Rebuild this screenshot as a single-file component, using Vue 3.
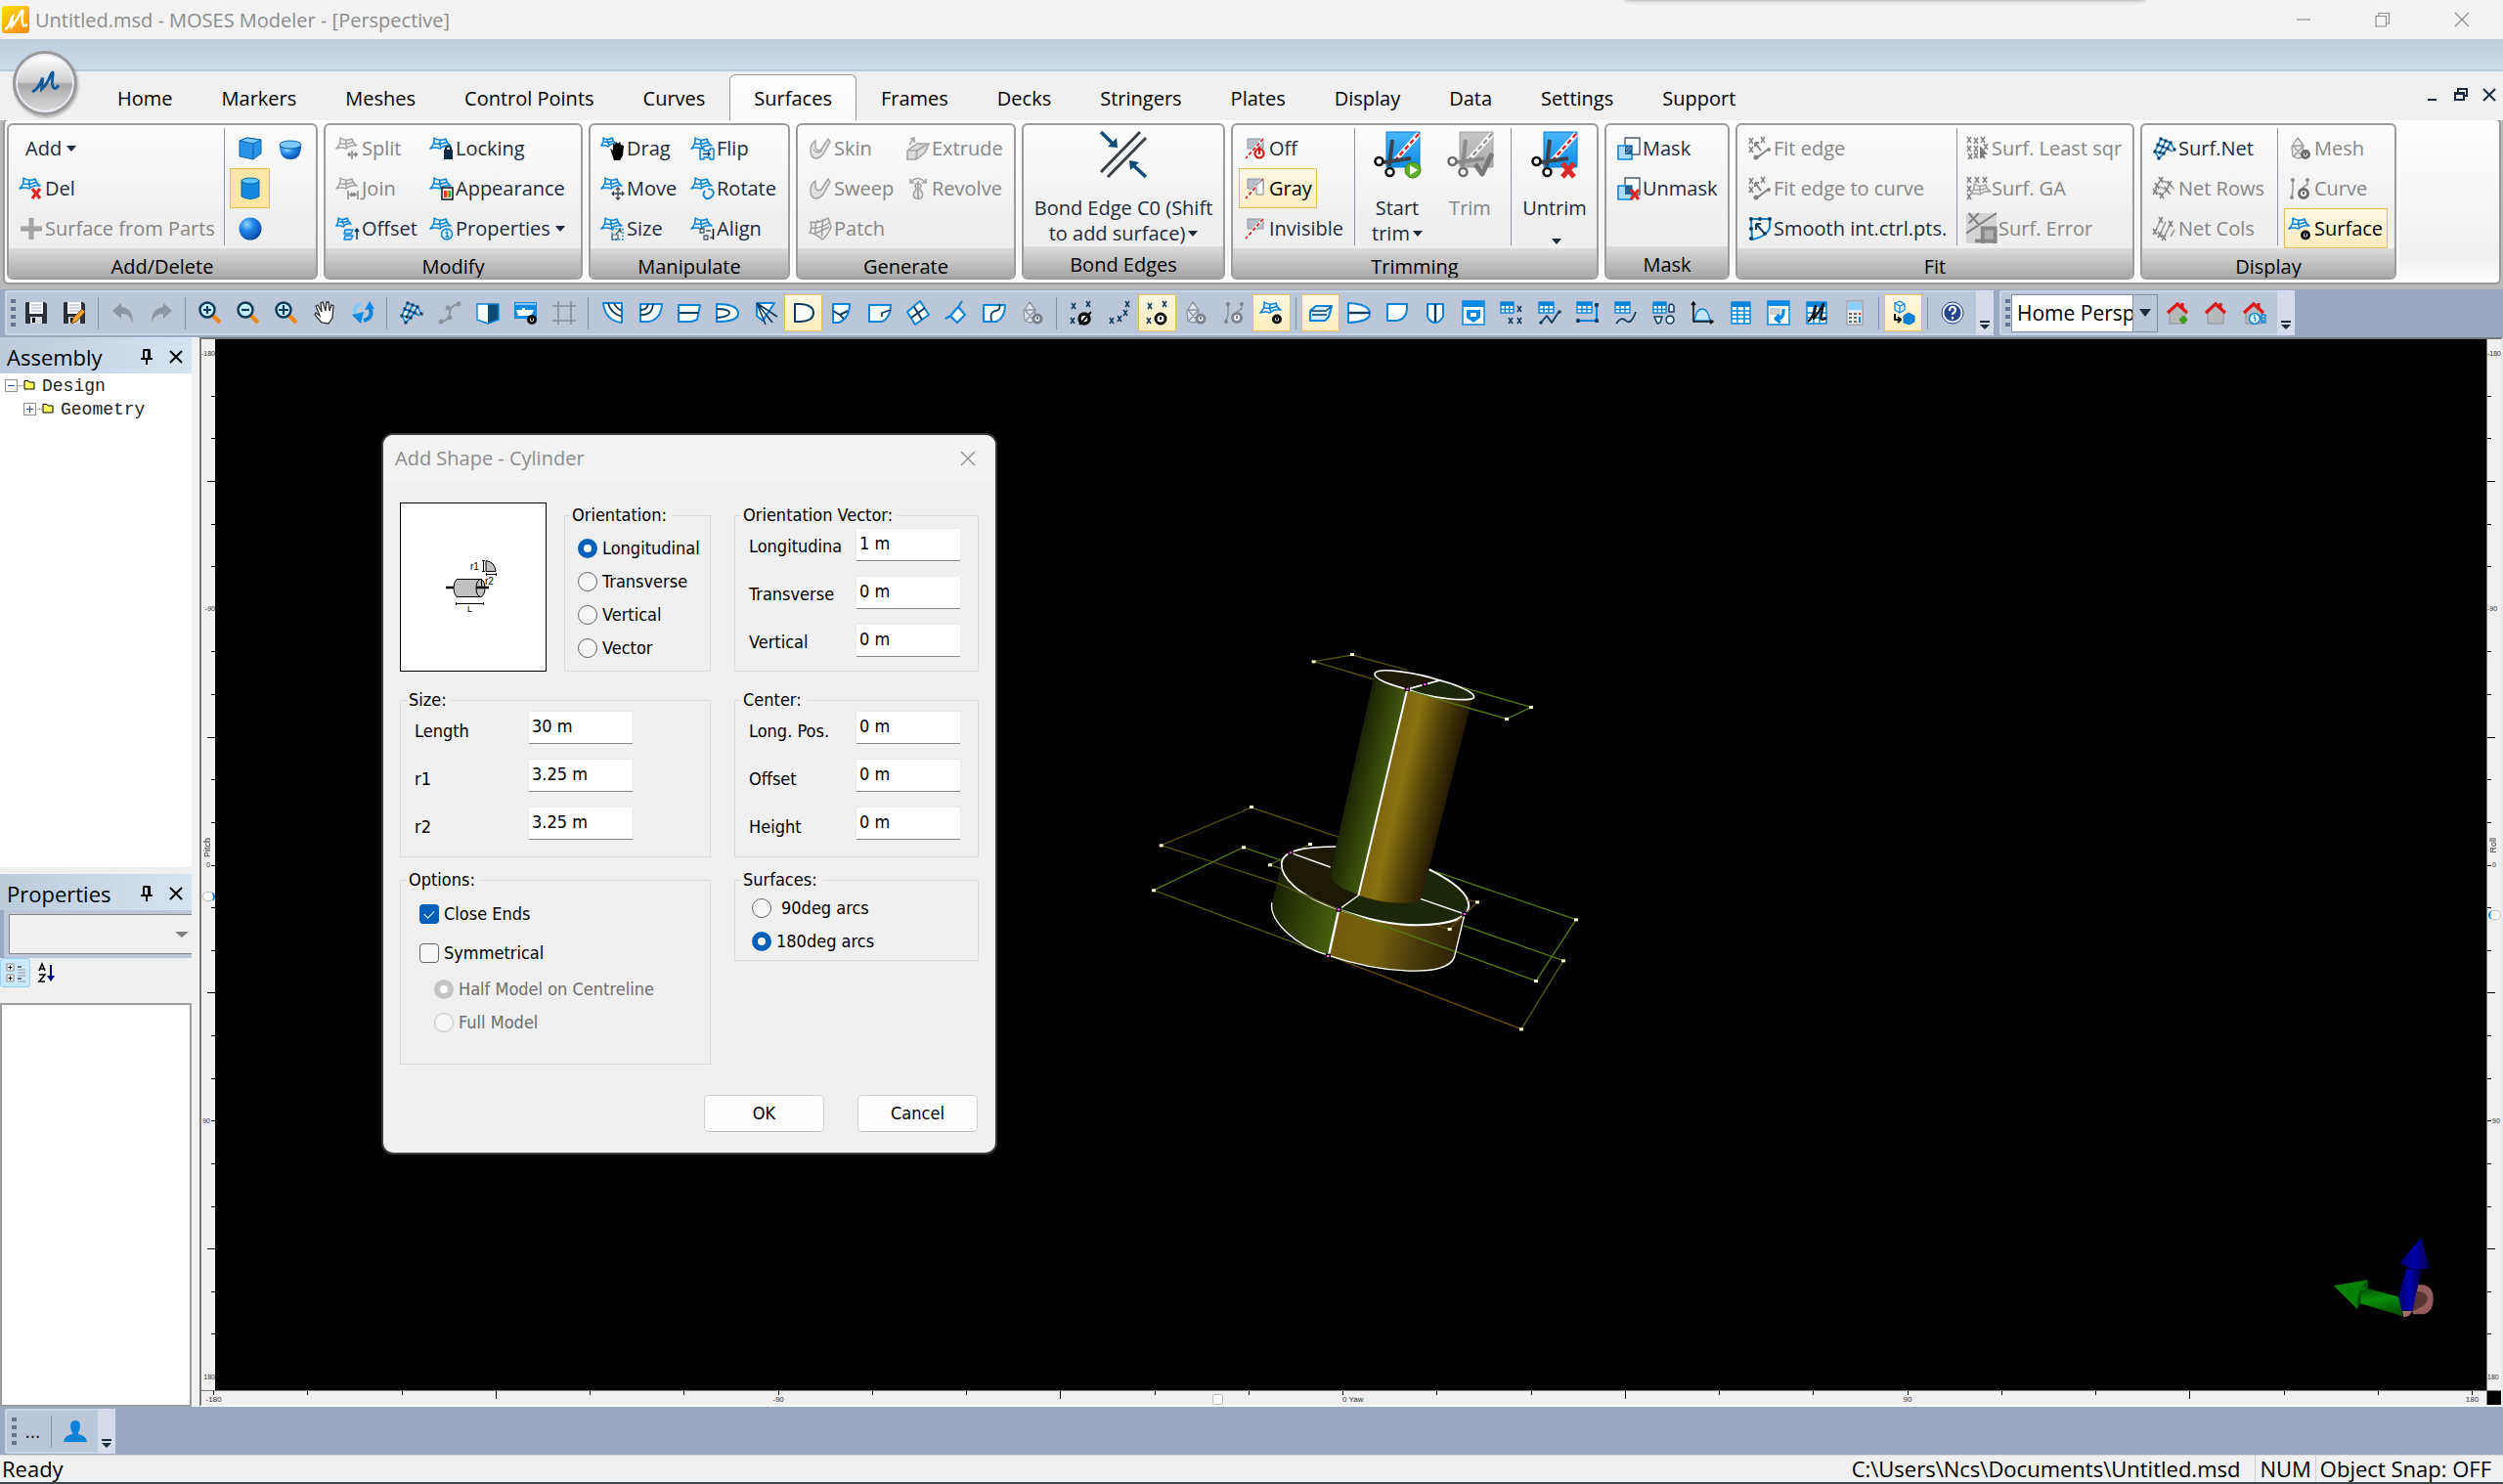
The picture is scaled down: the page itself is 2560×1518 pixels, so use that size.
<script setup>
import { ref } from 'vue'

const B = '#0b84d8'
const N = '#0d3b5e'
const line = (d, c = B, w = 2, f = 'none') => `<path d="${d}" fill="${f}" stroke="${c}" stroke-width="${w}" stroke-linejoin="round"/>`
const surf = line('M4 1Q9 5 16 2Q17 7 21 9Q14 8 10 12Q5 10 0 12Q5 7 4 1Z', B, 1.6, '#e2f3ff') + line('M4 7Q11 8 18 5M10 3.500Q9 8 11 11', B, 1.5)
const surfSmall = line('M2 1Q6 4 11 1Q12 5 15 7Q10 6 7 10Q4 8 0 9Q3 5 2 1ZM3 5Q8 6 13 4M6 3Q6 6 8 8', B, 1.5, '#e2f3ff')
const eye = (x = 17, y = 18, r = 4) => `<circle cx="${x}" cy="${y}" r="${r}" fill="#fff" stroke="#111" stroke-width="3"/><path d="M${x} ${y - 2}v3" stroke="#111" stroke-width="2"/>`
const xs = (pts, c = N) => pts.map(([x, y]) => line(`M${x - 2} ${y - 3}l4 6m0-6l-4 6`, c, 1.5)).join('')
const redx = (x = 17, y = 17) => line(`M${x - 4} ${y - 5}l8 10m0-10l-8 10`, '#dc2a2a', 3.4)
const table = (w = 15, h = 11) => `<rect x="1" y="1" width="${w}" height="${h}" fill="#fff" stroke="${B}" stroke-width="1.400"/><rect x="1" y="1" width="${w}" height="4" fill="${B}"/>` + line(`M1 8.500h${w}M${1 + w / 3} 4v${h - 3}M${1 + w * 2 / 3} 4v${h - 3}`, B, 1.4)
const net = (c = B) => line('M8 2L18 6L22 13M5 8L15 12L20 15M2 15L11 17M8 2L2 15L6 22M13 4L7 16M18 6L11 17L6 22', c, 1.5, '#eef8ff') + [[8, 2], [13, 4], [18, 6], [22, 13], [5, 8], [10, 10], [15, 12], [2, 15], [7, 16], [11, 17], [6, 22]].map(([x, y]) => `<rect x="${x - 1.5}" y="${y - 1.5}" width="3" height="3" fill="${N}"/>`).join('')
const mag = (s) => line('M14 14L22 22', '#f08a17', 4.5) + `<circle cx="9" cy="9" r="7.500" fill="#c9efff" stroke="${N}" stroke-width="2.500"/>` + line(s, N, 2.2)
const house = '<path d="M4 12v11h16V12l-8-8z" fill="#b7b9bd" stroke="#8d9095"/><path d="M2 12L12 3l10 9M17 2v5" fill="none" stroke="#dd1717" stroke-width="3.200"/>'
const trimMini = '<path d="M4 2h16v10H4z" fill="#b9bfc8" stroke="#8d949e"/><path d="M20 2L2 22" stroke="#fff" stroke-width="3"/><path d="M20 2L2 22" stroke="#d22" stroke-width="1.800" stroke-dasharray="4 2"/>'
const scissor = '<path d="M13 1h34v36H13z" fill="url(#sky)" stroke="#0078cf"/><path d="M46 3L22 30" stroke="#fff" stroke-width="5"/><path d="M46 3L22 30" stroke="#e02020" stroke-width="2.500" stroke-dasharray="5 3"/><path d="M19 9L16 36M38 28L10 32" stroke="#3b424c" stroke-width="4"/><circle cx="5.500" cy="31" r="4" fill="#fff" stroke="#111" stroke-width="2.600"/><circle cx="16.500" cy="42" r="4" fill="#fff" stroke="#111" stroke-width="2.600"/>'
const skin = '<path d="M2 14Q2 7 7 4v7q2 4 6 2L20 2l2 3-6 11q-4 6-9 6-5-1-5-8z" fill="#cdd8e2" stroke="#566b80" stroke-width="1.400"/>'
const floppy = '<path d="M2 1h19l2 2v20H1V2z" fill="#2b2f36"/><path d="M5 1h14v12H5z" fill="#f5f7fa"/><path d="M7 4h10M7 7h10M7 10h10" stroke="#a9b2bd"/><path d="M6 16h12v7H6z" fill="#d5d9df"/><path d="M8 17h3v5H8z" fill="#111"/>'
const D = 'M3 3h6q13 1 13 9t-13 9H3z'
const hull = 'M2 3h20q1 16-11 17H2z'

const icons = {
  del: surf + redx(),
  plus: line('M12 1v22M1 12h22', '#66727f', 5),
  box: '<path d="M1 4L9 1l14 2v14l-8 6L1 20z" fill="#2b93e6" stroke="#0863a8"/><path d="M1 4l14 3 8-4L9 1z" fill="#7cc7fb" stroke="#0863a8"/><path d="M15 7v16" stroke="#0863a8"/>',
  bowl: '<path d="M1 9q0 14 11 14T23 9z" fill="url(#ball)"/><ellipse cx="12" cy="8" rx="11" ry="4" fill="#7cc7fb" stroke="#0863a8"/>',
  cylinder: '<path d="M3 4v16q9 5 18 0V4z" fill="#1689df" stroke="#0863a8"/><ellipse cx="12" cy="4" rx="9" ry="3" fill="#5cc0fb" stroke="#0863a8"/>',
  sphere: '<circle cx="12" cy="12" r="11.500" fill="url(#ball)"/>',
  split: surf + line('M16 14v9M12 18h3M17 18h5M14 16l-2 2 2 2M19 16l2 2-2 2', N, 1.5),
  join: surf + line('M12 14v9M22 14v9M13 18h8M15 16l2 2-2 2M19 16l-2 2 2 2', N, 1.4),
  offset: surfSmall + line('M9 13h8l-2 4H8zM9 19h8l-2 4H8z', B, 1.4, '#bfe3fb') + line('M21 23V12M19 15l2-3 2 3', N, 1.5),
  locking: surf + '<path d="M14 13h9v10h-9z" fill="#0b2a45"/><path d="M16 14v-3q2.500-3 5 0v3" fill="none" stroke="#0b2a45" stroke-width="2"/>',
  appearance: surf + '<path d="M12 11h11v12H12z" fill="#fff" stroke="#111" stroke-width="1.500"/><path d="M14 14h3v7h-3z" fill="#e33"/><path d="M17 14h2v7h-2z" fill="#ea2"/><path d="M19 14h2v7h-2z" fill="#2a4"/>',
  properties: surf + `<circle cx="17" cy="17.500" r="5.500" fill="#dff3ff" stroke="${B}" stroke-width="1.500"/>` + line('M15.500 16h2v4m-2 0h4M17 13v1.500', B, 1.6),
  drag: surfSmall + '<path d="M9 12l3 2V7l2 1 1-3 2 2 2-2 1 3 3 1-1 10-3 5h-6z" fill="#000"/>',
  flip: surf + line('M9 12h4v2h6v-2h4v11h-4v-2h-6v2H9z', B, 1.5, '#dff3ff') + line('M12 17.500h7m-2-2l2 2-2 2', N, 1.5),
  move: surf + line('M17 11v12M11 17h12M15 13l2-2 2 2M15 21l2 2 2-2M13 15l-2 2 2 2M21 15l2 2-2 2', '#33404d', 1.3),
  rotate: surf + line('M14 14q-3 4 0 7t7-1 0-7l-4-1', B, 1.8),
  size: surf + line('M11 12h11v11H11z', B, 1.3, '#eee').replace('/>', ' stroke-dasharray="2 1.500"/>') + line('M11 18h6v5h-6zM15 17l5-4m-3 0h3v3', '#4a5866', 1.2),
  align: surf + line('M9 12h4v4H9zM13 19h4v4h-4zM15 14h5M19 21h3', '#4a5866', 1.3) + line('M22.500 12v11', '#111', 1.5),
  skin: skin + line('M5 13q3 5 9 1', '#566b80', 1.4), sweep: skin,
  patch: line('M2 5q8 2 18-4l3 9q-3 8-9 13-6-6-13-7 3-4 1-11zM3 11q9 1 18-5M6 17q8-3 15-7M9 3q-3 6-2 14M15 2q-2 9-1 18', '#5c6b7a', 1.5),
  extrude: '<path d="M1 14l10-7h12l-4 9-9 7H1z" fill="#c3cbd4" stroke="#5c6b7a" stroke-width="1.500"/><path d="M1 14h10l-1 9M11 14L22 7M3 8L8 1M4 2l4-1v5" fill="none" stroke="#5c6b7a" stroke-width="1.600"/>',
  revolve: '<path d="M9 8q3-3 6 0l-1 5q4 4 2 8-4 3-8 0-2-4 2-8z" fill="#d3dae2" stroke="#5c6b7a" stroke-width="1.500"/><path d="M12 4v19M4 6q7-9 16 0M4 2v4h4M20 2v4h-4" fill="none" stroke="#5c6b7a" stroke-width="1.600"/>',
  off: trimMini + '<circle cx="16" cy="17" r="4.500" fill="#fff" stroke="#dc1010" stroke-width="2.200"/><path d="M16 10v8" stroke="#dc1010" stroke-width="2.200"/>',
  gray: trimMini + '<path d="M13 8l7-5v15h-7z" fill="#fff" stroke="#7c848e"/>',
  invisible: trimMini,
  mask: line('M8 1h15v17H8z', '#4b5a68', 1.4, '#fff') + line('M1 9h14v14H1z', B, 1.6, '#a9dcfb') + '<path d="M8 9h7v9H8z" fill="#26628f"/><path d="M9 13l3-3M9 17l5-6" stroke="#9bd"/>',
  unmask: line('M8 1h15v17H8z', '#4b5a68', 1.4, '#fff') + line('M1 9h14v14H1z', B, 1.6, '#a9dcfb') + '<path d="M8 9h7v9H8z" fill="#26628f"/>' + redx(18, 18),
  fit: xs([[3, 4], [15, 3], [3, 13]]) + line('M7 6l6 8M7 6v4M7 6h4M20 13L8 22', N, 2) + `<circle cx="21" cy="13" r="2" fill="${N}"/><circle cx="8" cy="21" r="2.500" fill="${N}"/>`,
  smooth: line('M3 2h19v9q-3 9-18 12z', B, 2, '#fff') + line('M8 7l8 9M8 7v6M8 7h5', N, 2) + [[3, 2], [12, 2], [22, 2], [3, 12], [17, 17], [3, 22]].map(([x, y]) => `<circle cx="${x}" cy="${y}" r="2" fill="${N}"/>`).join(''),
  least: xs([[3, 3], [10, 4], [17, 3], [3, 12], [10, 12], [20, 10], [4, 20], [10, 19]]) + '<path d="M14 9l8 9h-4l2 5-3-2-3 1z" fill="#222"/>',
  ga: xs([[3, 3], [11, 3], [19, 3], [3, 12], [3, 20]]) + '<g transform="translate(4 6)">' + surf + '</g>',
  error: '<path d="M0 0h24v24H0z" fill="#b9c3d2"/><path d="M24 0L0 16M2 0l8 9M10 0L2 8" stroke="#333" stroke-width="1.500" fill="none"/><path d="M13 24V12h10v12M7 22h16" stroke="#444" stroke-width="3" fill="#888"/>',
  net: net(),
  rows: line('M8 3L17 7L22 13M4 9L14 13L18 18M2 15L9 19', '#4c6b86', 1.6) + xs([[8, 3], [17, 7], [4, 9], [14, 13], [2, 15], [9, 19]]),
  cols: line('M8 3L2 15M13 5L7 18M18 7L11 21M22 13L18 20', '#4c6b86', 1.6) + xs([[8, 3], [2, 15], [7, 18], [18, 7], [11, 21]]),
  mesh: line('M9 1l6 8-2 12-4 1-5-2-1-10zM4 9h11M5 20l9-10M14 20L4 9', '#55616d', 1.3, '#dfe4ea') + eye(17, 18, 3.5),
  curve: line('M4 3v8q0 4-1 10M19 3v5q-6 2-7 8', '#55616d', 1.6) + '<circle cx="4" cy="3" r="2" fill="#445"/><circle cx="19" cy="3" r="2" fill="#445"/><circle cx="3" cy="21" r="2" fill="#445"/>' + eye(15, 17, 4.5),
  surface: surf + eye(17, 18.5, 3.5),
  save: floppy,
  saveAs: floppy + '<path d="M9 23l2-6L20 8l3 3-9 10z" fill="#f2a531" stroke="#7c4a10"/>',
  undo: '<path d="M10 2L1 10l9 8v-5q8-1 12 9 0-15-12-16z" fill="#8b95a5"/>',
  redo: '<path d="M14 2l9 8-9 8v-5q-8-1-12 9 0-15 12-16z" fill="#8b95a5"/>',
  zoomIn: mag('M9 5v8M5 9h8'), zoomOut: mag('M5 9h8'), zoomFit: mag('M9 4v10M4 9h10'),
  hand: '<path d="M9 22L2 14l1-2 4 3-4-10 2-1 4 7-1-9 2-1 3 9 1-9h2l1 9 2-6 2 1-1 12-4 6z" fill="#fff" stroke="#333" stroke-width="1.300"/>',
  spin: line('M10 3q-8 3-6 9', '#7cc7fb', 4) + line('M19 5q5 12-6 15', B, 4) + '<path d="M14 9l5-9 5 8zM13 11L1 14l9 9z" fill="#0b8ae6"/>',
  nodes: line('M4 21Q12 19 12 12T20 3', '#8d949e', 2) + [[3, 21], [12, 17], [10, 7], [21, 3]].map(([x, y]) => `<circle cx="${x}" cy="${y}" r="2.500" fill="#8d949e"/>`).join(''),
  half: '<path d="M1 3h11v20L1 19z" fill="#fff"/><path d="M12 3h11v16l-11 4z" fill="#0d4a75"/>' + line('M1 3h22v16l-11 4-11-4z', '#0b84d8', 1.4),
  ship: '<path d="M0 1h23v17H0z" fill="#0b8ae6"/><path d="M1 3h21" stroke="#fff"/><path d="M2 9h6V7h3v2h9l-3 6H4z" fill="#fff"/>' + eye(18, 19, 3.5),
  grid: line('M6 0v24M19 0v24M0 5h24M0 20h24', '#868e9b', 1.6),
  v1: line('M2 2h19v20Q4 20 2 2z', B, 2, '#fff') + line('M7 2q2 10 14 14M13 2q2 5 8 8', N, 1.8),
  v2: line('M1 3h22q-1 16-14 18H1z', B, 2, '#fff') + line('M1 14q12 1 13-11M1 9q7 0 8-6', N, 1.8),
  v3: line('M1 4h22l-3 15-6 2H1z', B, 2, '#fff') + line('M1 12h21', N, 2),
  v4: line('M1 3q21 0 22 9t-22 9z', B, 2, '#fff') + line('M1 8q13 0 13 4T1 17', N, 1.8),
  v5: line('M3 2h18L9 20 3 15z', B, 2, '#fff') + line('M3 2l9 22M3 2l16 20M3 2l21 14', N, 1.6),
  v6: line(D, N, 2, '#fff'),
  v7: line('M3 3h17q0 14-11 19H3z', B, 2, '#fff') + line('M3 10l7 4 4 4M10 14l8-4', N, 2),
  v8: line('M1 4h22q0 13-9 17H1z', B, 2, '#fff') + line('M23 9l-9 3v4', N, 1.8),
  v9: line('M14 0l9 14-14 10L1 11z', B, 2, '#fff') + line('M8 6l8 13M19 7L5 17', N, 2),
  v10: line('M14 6l7 8-8 8-7-7zM14 6l4-6M1 18l5-3', B, 2.2, '#fff'),
  v11: line('M1 4h22q0 13-9 17H1z', B, 2, '#fff') + line('M17 3q2 6-4 7t-4 10', N, 1.8),
  meshGray: line('M9 1l6 8-2 12-4 1-5-2-1-10zM4 9h11M5 20l9-10M14 20L4 9', '#8d949e', 1.3, '#dfe4ea') + eye().replace(/#111/g, '#7b828d'),
  hideX: xs([[4, 5], [19, 3], [3, 20]]) + '<circle cx="15" cy="18" r="5" fill="#fff" stroke="#111" stroke-width="3.500"/><path d="M10 24L22 11" stroke="#111" stroke-width="2"/>',
  allX: xs([[20, 3], [18, 12], [12, 18], [4, 20]]),
  showX: xs([[4, 5], [19, 3], [3, 20]]) + eye(15, 18, 5),
  curveGray: line('M6 3v8q0 4-2 10M20 3v5q-6 2-7 8', '#8d949e', 1.6) + '<circle cx="6" cy="3" r="2" fill="#7b828d"/><circle cx="20" cy="3" r="2" fill="#7b828d"/><circle cx="4" cy="21" r="2" fill="#7b828d"/>' + eye(15, 17, 4.5).replace(/#111/g, '#7b828d'),
  w1: line('M1 10l6-5h16l-3 11-4 4H1z', B, 2.2, '#d6eefc') + line('M2 10h15l5-4M3 14h15', N, 1.4),
  w2: line('M1 2q21 1 22 10T1 22z', B, 2, '#fff') + line('M1 12h22', N, 2.4),
  w3: line(hull, B, 2, '#fff'),
  w4: line('M4 3h16v13q-4 6-8 6-5 0-8-6z', B, 2, '#fff') + line('M12 3v18', N, 2.4),
  w5: '<path d="M1 0h22v24H1z" fill="#fff" stroke="#0b84d8" stroke-width="1.500"/><path d="M1 0h22v6H1z" fill="#0b8ae6"/><path d="M5 9h14v8l-7 5-7-5z" fill="#0b8ae6"/><path d="M9 12h6v4H9z" fill="#fff"/>',
  t1: table(13, 11) + xs([[20, 8], [11, 20], [20, 20]]),
  t2: table() + line('M3 22l6-7 5 7 8-12', N, 1.8) + `<circle cx="3" cy="22" r="1.800" fill="${N}"/><circle cx="22" cy="11" r="1.800" fill="${N}"/>`,
  t3: table() + line('M2 20h20', B, 2) + line('M21 4v14', B, 2) + [[2, 20], [21, 20], [21, 4]].map(([x, y]) => `<circle cx="${x}" cy="${y}" r="2.200" fill="${N}"/>`).join(''),
  t4: table() + line('M2 23q5-8 10-3t10-9', N, 1.7),
  t5: table(13, 11) + line('M17 11V5q2-4 5 0v6zM2 16h8l-2 6-3 1zM18 15a4 4 0 1 0 .1 0z', N, 1.5, '#dff3ff'),
  chart: '<path d="M4 20q2-12 8-12t8 12z" fill="#bfe6ff" stroke="#0b84d8" stroke-width="1.500"/>' + line('M3 1v20h20M1 4l2-3 2 3M20 19l3 2-3 2', '#111', 1.6),
  t6: '<path d="M3 1h19v22H3z" fill="#fff"/><path d="M3 1h19v5H3z" fill="#0b84d8"/>' + line('M3 1h19v22H3zM3 10h19M3 14h19M3 18h19M9 6v17M16 6v17', B, 1.5),
  t7: '<path d="M1 0h22v24H1z" fill="#fff" stroke="#0b84d8" stroke-width="1.500"/><path d="M1 0h22v5H1z" fill="#0b8ae6"/><path d="M3 7h11v7H3z" fill="#ccd1d8"/>' + line('M17 8q1 10-7 10M13 14l-4 4 5 4', '#0b8ae6', 3.2),
  t8: '<path d="M2 1h20v22H2z" fill="#fff"/><path d="M2 1h20v5H2z" fill="#0b84d8"/>' + line('M2 1h20v22H2zM2 12h20M2 17h20M9 6v17M15 6v17', B, 1.5) + line('M3 21Q8 18 11 5l-2 13Q14 12 19 3l-3 15q2 2 6-1', '#111', 2.2),
  calc: '<path d="M4 0h16v24H4z" fill="#e9e9ec" stroke="#8b9099"/><path d="M5 1h14v8H5z" fill="#8ad0fb"/><path d="M6 12h3v2H6zM6 16h3v2H6zM6 20h3v2H6zM11 12h3v2h-3zM11 16h3v2h-3zM11 20h3v2h-3z" fill="#666"/><path d="M16 12h2v2h-2z" fill="#d33"/><path d="M16 16h2v6h-2z" fill="#0b84d8"/>',
  convert: line('M3 2l5-2 5 3v6l-5 3-5-3zM3 2l5 3 5-2M8 5v7', B, 1.3, '#dff3ff') + '<path d="M12 15l5-3 6 3v6l-5 3-6-2z" fill="#0b84d8" stroke="#0b6fb8"/>' + line('M3 13v6h6M6 16l3 3-3 3', '#111', 2),
  help: '<circle cx="12" cy="12" r="11" fill="#e9eefb" stroke="#2c4684"/><circle cx="12" cy="12" r="8.500" fill="#24448f"/>' + line('M9 10q0-4 3-4t3 3q0 2-3 4v1M12 16v2.500', '#fff', 2.2),
  homeAdd: house + line('M18 15v8M14 19h8', '#3d9a12', 3.4), home: house,
  homeInfo: house + `<circle cx="13" cy="18" r="5.500" fill="#dff3ff" stroke="${B}" stroke-width="1.500"/>` + line('M12 17h1.500v3.500M13 14v1.500M20 14h4v8h-4zM21 17h2M21 20h2', B, 1.3),
  bond: line('M41 1L1 42M47 7L8 47', '#3b4148', 3) + line('M1 1L14 14M47 47L34 35', '#0d4a75', 3.4) + '<path d="M18 17L8 16l9-9zM30 30l10 2-9 8z" fill="#0d4a75"/>',
  startTrim: scissor + '<circle cx="40" cy="40" r="8" fill="#5fae2b" stroke="#3d8412"/><path d="M37 35l8 5-8 5z" fill="#fff"/>',
  trim: scissor + line('M29 34l7 10L46 23', '#222', 5),
  untrim: scissor + line('M32 33l12 14M44 33L32 47', '#dc2a2a', 5),
}

const tabs = ['Home', 'Markers', 'Meshes', 'Control Points', 'Curves', 'Surfaces', 'Frames', 'Decks', 'Stringers', 'Plates', 'Display', 'Data', 'Settings', 'Support']

const i = (icon, text, o = {}) => ({ icon, text, ...o })
const off = { off: true }
const groups = [
  { name: 'Add/Delete', w: 318, cols: [
    { w: 214, items: [i('', 'Add', { arrow: true }), i('del', 'Del'), i('plus', 'Surface from Parts', off)] }, { sep: true, w: 6 },
    { w: 41, shape: true, items: [i('box', '', { label: 'Box' }), i('cylinder', '', { on: true, label: 'Cylinder' }), i('sphere', '', { label: 'Sphere' })] },
    { w: 41, shape: true, items: [i('bowl', '', { label: 'Bowl' })] }] },
  { name: 'Modify', w: 265, cols: [
    { w: 96, items: [i('split', 'Split', off), i('join', 'Join', off), i('offset', 'Offset')] },
    { w: 156, items: [i('locking', 'Locking'), i('appearance', 'Appearance'), i('properties', 'Properties', { arrow: true })] }] },
  { name: 'Manipulate', w: 206, cols: [
    { w: 92, items: [i('drag', 'Drag'), i('move', 'Move'), i('size', 'Size')] },
    { w: 104, items: [i('flip', 'Flip'), i('rotate', 'Rotate'), i('align', 'Align')] }] },
  { name: 'Generate', w: 225, cols: [
    { w: 100, items: [i('skin', 'Skin', off), i('sweep', 'Sweep', off), i('patch', 'Patch', off)] },
    { w: 115, items: [i('extrude', 'Extrude', off), i('revolve', 'Revolve', off)] }] },
  { name: 'Bond Edges', w: 208, cols: [{ w: 192, big: i('bond', ['Bond Edge C0 (Shift', 'to add surface)'], { arrow: true }) }] },
  { name: 'Trimming', w: 376, cols: [
    { w: 118, items: [i('off', 'Off'), i('gray', 'Gray', { on: true }), i('invisible', 'Invisible')] }, { sep: true, w: 2 },
    { w: 84, big: i('startTrim', ['Start', 'trim'], { arrow: true }) }, { w: 65, big: i('trim', ['Trim'], off) }, { sep: true, w: 3, gap: true },
    { w: 84, big: i('untrim', ['Untrim', ''], { arrow: true }) }] },
  { name: 'Mask', w: 128, cols: [{ w: 112, items: [i('mask', 'Mask'), i('unmask', 'Unmask')] }] },
  { name: 'Fit', w: 408, cols: [
    { w: 218, items: [i('fit', 'Fit edge', off), i('fit', 'Fit edge to curve', off), i('smooth', 'Smooth int.ctrl.pts.')] }, { sep: true, w: 5 },
    { w: 174, items: [i('least', 'Surf. Least sqr', off), i('ga', 'Surf. GA', off), i('error', 'Surf. Error', { off: true, wide: true })] }] },
  { name: 'Display', w: 262, cols: [
    { w: 132, items: [i('net', 'Surf.Net'), i('rows', 'Net Rows', off), i('cols', 'Net Cols', off)] }, { sep: true, w: 7 },
    { w: 110, items: [i('mesh', 'Mesh', off), i('curve', 'Curve', off), i('surface', 'Surface', { on: true })] }] },
]

const tools = [
  'save', 'saveAs', '|', 'undo', 'redo', '|', 'zoomIn', 'zoomOut', 'zoomFit', 'hand', 'spin', '|', 'net', 'nodes', 'half', 'ship', 'grid', '|',
  'v1', 'v2', 'v3', 'v4', 'v5', '*v6', 'v7', 'v8', 'v9', 'v10', 'v11', 'meshGray', '|', 'hideX', 'allX', '*showX', 'meshGray', 'curveGray', '*surface', '|',
  '*w1', 'w2', 'w3', 'w4', 'w5', 't1', 't2', 't3', 't4', 't5', 'chart', 't6', 't7', 't8', 'calc', '|', '*convert', '|', 'help',
]

const ticks = Array.from({ length: 25 }, (_, n) => {
  const v = -180 + n * 15
  const label = v % 90 === 0 ? String(v) : ''
  return { v, label, major: v % 90 !== 0 && v % 45 === 0, bare: label.length > 2 }
})

const orientation = ref('Longitudinal')
const arcs = ref('180deg arcs')
const model = ref('Half Model on Centreline')
const closeEnds = ref(true)
const symmetrical = ref(false)
const vector = ref([['Longitudina', '1 m'], ['Transverse', '0 m'], ['Vertical', '0 m']])
const size = ref([['Length', '30 m'], ['r1', '3.25 m'], ['r2', '3.25 m']])
const center = ref([['Long. Pos.', '0 m'], ['Offset', '0 m'], ['Height', '0 m']])
</script>

<template>
  <div class="app">
    <svg class="defs" width="0" height="0" aria-hidden="true">
      <defs>
        <radialGradient id="ball" cx=".35" cy=".3" r=".8"><stop offset="0" stop-color="#8fd2ff" /><stop offset=".4" stop-color="#1f86e6" /><stop offset="1" stop-color="#063f96" /></radialGradient>
        <linearGradient id="sky" x1="0" y1="0" x2="0" y2="1"><stop offset="0" stop-color="#4ab4f8" /><stop offset="1" stop-color="#0b8fe8" /></linearGradient>
      </defs>
    </svg>

    <header class="titlebar">
      <svg class="logo" viewBox="0 0 28 28"><defs><linearGradient id="lg" x1="0" y1="0" x2=".6" y2="1"><stop offset="0" stop-color="#ffe100" /><stop offset="1" stop-color="#f7941d" /></linearGradient></defs><rect width="28" height="28" rx="3" fill="url(#lg)" /><path d="M3 24Q8 22 10 12l1-1-1 10Q14 17 20 5q2-1 1 3-1 9 1 12 1 1 4-1" fill="none" stroke="#fff" stroke-width="2.500" /></svg>
      <span class="title">Untitled.msd - MOSES Modeler - [Perspective]</span>
      <button class="win" aria-label="Minimize"><svg viewBox="0 0 16 16"><path d="M1 8h14" /></svg></button>
      <button class="win" aria-label="Restore"><svg viewBox="0 0 16 16"><path d="M1 4.500h10.500V15H1zM4 4V1.500h10.500V12H12" /></svg></button>
      <button class="win" aria-label="Close"><svg viewBox="0 0 16 16"><path d="M1 1l14 14M15 1L1 15" /></svg></button>
      <div class="snapbar"></div>
    </header>

    <div class="strip"></div>
    <nav class="tabs">
      <button class="orb" aria-label="Application menu"><svg viewBox="0 0 30 26"><path d="M1 24Q8 20 12 9l-1 12Q17 16 21 5q2-4 2 0-2 12 1 15 2 1 5-3" fill="none" stroke="#0d5a9c" stroke-width="3" /></svg></button>
      <button v-for="t in tabs" :key="t" class="tab" :class="{ active: t === 'Surfaces' }">{{ t }}</button>
      <span class="mdi">
        <button aria-label="Minimize view"><svg viewBox="0 0 16 16"><path d="M3 13h9" /></svg></button>
        <button aria-label="Restore view"><svg viewBox="0 0 16 16"><path d="M5 5V2h9v7h-3M2 6h9v7H2zM2 7h9" /></svg></button>
        <button aria-label="Close view"><svg viewBox="0 0 16 16"><path d="M2 2l12 12M14 2L2 14" /></svg></button>
      </span>
    </nav>

    <div class="ribbonwrap">
      <div class="ribbon">
        <section v-for="g in groups" :key="g.name" class="group" :style="{ width: g.w + 'px' }">
          <div class="cols">
            <div v-for="(c, n) in g.cols" :key="n" class="col" :class="{ sep: c.sep, gap: c.gap, shapes: c.shape }" :style="{ width: c.w + 'px' }">
              <button v-for="it in c.items" :key="it.icon + it.text" class="item" :class="{ off: it.off, on: it.on, noicon: !it.icon }" :aria-label="it.label">
                <svg v-if="it.icon" :class="{ wide: it.wide }" viewBox="0 0 24 24" v-html="icons[it.icon]"></svg><span v-if="it.text">{{ it.text }}</span><i v-if="it.arrow" class="arrow"></i>
              </button>
              <button v-if="c.big" class="big" :class="{ off: c.big.off }">
                <svg viewBox="0 0 48 48" v-html="icons[c.big.icon]"></svg>
                <span v-for="(l, k) in c.big.text" :key="k" class="bl" :class="{ lone: !l }">{{ l }}<i v-if="c.big.arrow && k === 1" class="arrow"></i></span>
              </button>
            </div>
          </div>
          <h2>{{ g.name }}</h2>
        </section>
      </div>
    </div>

    <div class="toolbars">
      <div class="bar">
        <span class="grip"></span>
        <template v-for="(t, n) in tools" :key="n">
          <span v-if="t === '|'" class="tsep"></span>
          <button v-else class="tool" :class="{ on: t[0] === '*' }" :aria-label="t.replace('*', '')"><svg viewBox="0 0 24 24" v-html="icons[t.replace('*', '')]"></svg></button>
        </template>
        <button class="more" aria-label="More tools"></button>
      </div>
      <div class="bar">
        <span class="grip"></span>
        <span class="combo"><select aria-label="View"><option>Home Perspective</option></select><i class="arrow"></i></span>
        <button v-for="t in ['homeAdd', 'home', 'homeInfo']" :key="t" class="tool" :aria-label="t"><svg viewBox="0 0 24 24" v-html="icons[t]"></svg></button>
        <button class="more" aria-label="More views"></button>
      </div>
    </div>

    <main class="work">
      <aside class="side">
        <header class="phead"><h3>Assembly</h3><button aria-label="Pin"><svg viewBox="0 0 16 16"><path d="M4.500 1h7M5 1v9M10 1v9M11 1v9M2 10h12M8 10v6" /></svg></button><button aria-label="Close"><svg viewBox="0 0 16 16"><path d="M2 2l12 12M14 2L2 14" /></svg></button></header>
        <ul class="tree">
          <li><svg viewBox="0 0 34 16"><rect x=".5" y="1.500" width="12" height="12" fill="#fff" stroke="#919191" /><path d="M3 7.500h7" stroke="#2b4f9b" /><path d="M14 7.500h5" stroke="#888" stroke-dasharray="1 1" /><path d="M20 2.500h4l1 1.500h5v7H20z" fill="#ffff5e" stroke="#000" /></svg>Design</li>
          <li class="sub"><svg viewBox="0 0 34 16"><rect x=".5" y="1.500" width="12" height="12" fill="#fff" stroke="#919191" /><path d="M3 7.500h7M6.500 4v7" stroke="#2b4f9b" /><path d="M14 7.500h5" stroke="#888" stroke-dasharray="1 1" /><path d="M20 2.500h4l1 1.500h5v7H20z" fill="#ffff5e" stroke="#000" /></svg>Geometry</li>
        </ul>
        <header class="phead"><h3>Properties</h3><button aria-label="Pin"><svg viewBox="0 0 16 16"><path d="M4.500 1h7M5 1v9M10 1v9M11 1v9M2 10h12M8 10v6" /></svg></button><button aria-label="Close"><svg viewBox="0 0 16 16"><path d="M2 2l12 12M14 2L2 14" /></svg></button></header>
        <div class="pcombo"><select aria-label="Object" disabled></select><i class="arrow"></i></div>
        <div class="psort">
          <button class="sel" aria-label="Categorized"><svg viewBox="0 0 20 20"><path d="M1 1h7v7H1zM1 12h7v7H1z" fill="#fff" stroke="#888" /><path d="M2.500 4.500h4M4.500 2.500v4M2.500 15.500h4M4.500 13.500v4M12 4h4M12 16h4" stroke="#000" /><path d="M12 7h8M12 10h8M12 13h8M12 19h8" stroke="#999" /></svg></button>
          <button aria-label="Alphabetical"><svg viewBox="0 0 20 20"><path d="M3 8l3-7 3 7M4 6h4M3 12h6l-6 7h6" fill="none" stroke="#000" stroke-width="1.500" /><path d="M15 2v14" stroke="#000080" stroke-width="2" /><path d="M11 13h8l-4 6z" fill="#000080" /></svg></button>
        </div>
        <div class="pbox"></div>
      </aside>

      <section class="view">
        <div class="vrow">
          <div class="vruler">
            <div v-for="t in ticks" :key="t.v" class="tick" :class="{ major: t.major }"><span>{{ t.label }}</span><i v-if="!t.bare"></i></div>
            <b class="axis">Pitch</b><em class="thumb"></em>
          </div>
          <div class="canvas">
            <svg class="model" viewBox="0 0 1440 1320">
              <defs>
                <linearGradient id="tl" gradientUnits="userSpaceOnUse" x1="730" y1="170" x2="838" y2="195"><stop offset="0" stop-color="#1a2104" /><stop offset="1" stop-color="#43590c" /></linearGradient>
                <linearGradient id="tr" gradientUnits="userSpaceOnUse" x1="838" y1="195" x2="1031" y2="241"><stop offset="0" stop-color="#7c650f" /><stop offset=".25" stop-color="#8a7310" /><stop offset=".6" stop-color="#544309" /><stop offset="1" stop-color="#211903" /></linearGradient>
                <linearGradient id="bl" gradientUnits="userSpaceOnUse" x1="430" y1="820" x2="612" y2="860"><stop offset="0" stop-color="#1a2104" /><stop offset="1" stop-color="#445b0c" /></linearGradient>
                <linearGradient id="br" gradientUnits="userSpaceOnUse" x1="612" y1="920" x2="1000" y2="1000"><stop offset="0" stop-color="#72590d" /><stop offset=".35" stop-color="#75600e" /><stop offset=".7" stop-color="#46370a" /><stop offset="1" stop-color="#2a2005" /></linearGradient>
              </defs>
              <g fill="none" stroke-width="4">
                <path d="M838 136L669 90 551 110 838 195M640 653L360 558 83 674 452 794" stroke="#55520f" />
                <path d="M905 748L1356 902 1233 1090 980 998M1010 920L1317 1028M480 730L335 680 60 812" stroke="#557a10" />
                <path d="M60 812L597 1012M1317 1028L1188 1238M417 734L540 670M417 734l40 14" stroke="#4a5f10" />
                <path d="M597 1012L1188 1238" stroke="#6b4f0d" />
              </g>
              <path d="M452 735L422 855C415 910 500 985 597 1012L628 871C540 845 455 790 452 735Z" fill="url(#bl)" />
              <path d="M628 871L597 1012C760 1068 955 1085 982 1018L1014 885C980 930 800 930 628 871Z" fill="url(#br)" />
              <path d="M628 871C500 830 450 770 452 730C456 690 520 678 620 678L760 720 688 828Z" fill="#1c1a05" />
              <path d="M628 871L688 828 905 748C970 780 1027 820 1027 860C1024 900 970 917 870 919C790 919 720 902 628 871Z" fill="#1b2706" />
              <g fill="none" stroke="#fff">
                <path d="M422 850C415 910 500 985 597 1012C760 1068 960 1080 982 1018L1014 885" stroke-width="4" />
                <path d="M628 871C500 830 450 770 452 730C456 690 520 678 620 678" stroke-width="5" />
                <path d="M905 748C970 780 1027 820 1027 860C1024 900 970 917 870 919C790 919 720 902 628 871" stroke-width="6" />
                <path d="M480 697l122 44M628 871l60-43M878 838l136 47" stroke-width="4" />
                <path d="M628 871L597 1012" stroke-width="7" />
              </g>
              <path d="M735 160L600 765Q612 802 688 825L838 195Q760 180 735 150Z" fill="url(#tl)" />
              <path d="M838 195L690 828Q770 856 850 850 875 848 880 838L1037 228Q950 232 838 195Z" fill="url(#tr)" />
              <path d="M440 790L628 871" stroke="#55520f" stroke-width="4" />
              <path d="M928 920L968 931 1053 848l-30-6" fill="none" stroke="#6b4f0d" stroke-width="4" />
              <path d="M628 871L985 1000" stroke="#557a10" stroke-width="4" />
              <path d="M838 195C790 182 735 165 738 147C745 125 870 145 938 168Z" fill="#1c1a05" stroke="#fff" stroke-width="5" />
              <path d="M838 195L938 168C990 180 1045 205 1043 220C1035 235 910 225 838 195Z" fill="#1b2706" stroke="#fff" stroke-width="5" />
              <path d="M838 195L688 828" stroke="#fff" stroke-width="6" />
              <path d="M1010 190L1218 250 1143 286 850 202" fill="none" stroke="#557a10" stroke-width="4" />
              <g fill="#ffffc8"><rect v-for="p in [[551, 110], [669, 88], [1218, 250], [1143, 286], [360, 556], [83, 674], [336, 680], [60, 812], [417, 734], [540, 670], [1053, 848], [968, 931], [1356, 902], [1317, 1028], [1233, 1090], [1188, 1238]]" :key="p[0]" :x="p[0] - 6" :y="p[1] - 4" width="12" height="9" /></g>
              <g fill="#f5e" stroke="#000" stroke-width="4"><rect v-for="p in [[838, 194], [892, 180], [480, 697], [628, 871], [1014, 885], [595, 1014]]" :key="p[0]" :x="p[0] - 6" :y="p[1] - 5" width="12" height="10" /></g>
            </svg>

            <svg class="triad" viewBox="130 125 330 270">
              <defs>
                <linearGradient id="ga" x1="0" y1="0" x2=".25" y2="1"><stop offset="0" stop-color="#023c02" /><stop offset=".5" stop-color="#089008" /><stop offset="1" stop-color="#035503" /></linearGradient>
                <linearGradient id="ba"><stop offset="0" stop-color="#00006a" /><stop offset=".5" stop-color="#0000aa" /><stop offset="1" stop-color="#00004a" /></linearGradient>
              </defs>
              <path d="M400 282h18q29 8 29 40 0 50-38 50h-24l-5-20z" fill="#935c5c" /><path d="M398 303q30-2 32 24l-10 18-42 20z" fill="#583535" />
              <path d="M222 286L345 320 353 378 212 336Z" fill="url(#ga)" /><path d="M141 284L246 267V290L226 300 214 356Z" fill="#068006" /><path d="M246 267v20l-20 5-2 45-10 19q-6-50 32-89z" fill="#045004" />
              <path d="M364 232L340 320 350 360 383 362 411 236Z" fill="url(#ba)" /><path d="M410 136L345 213Q380 245 436 230Z" fill="url(#ba)" />
              <path d="M352 362h30q-8 20-26 18z" fill="#a56c65" />
            </svg>

            <form class="dialog" role="dialog" aria-label="Add Shape - Cylinder" @submit.prevent>
              <header class="dhead"><span>Add Shape - Cylinder</span><button type="button" aria-label="Close"><svg viewBox="0 0 16 16"><path d="M1 1l14 14M15 1L1 15" /></svg></button></header>
              <div class="dbody">
                <div class="pair">
                  <div class="preview">
                    <svg viewBox="0 0 56 56" aria-hidden="true"><path d="M11 19.500h25v18H11q-3-3-3-9t3-9z" fill="#c0c0c0" stroke="#000" /><ellipse cx="35.500" cy="28.500" rx="4.500" ry="9" fill="#c0c0c0" stroke="#000" /><path d="M0 28h8M31 28h13" stroke="#000" stroke-width="2.500" /><path d="M36.500 19v9M10 44.500h28M10.500 43v3M38.500 43v3" stroke="#000" fill="none" /><path d="M41 .500q9 1 10 11H41z" fill="#c0c0c0" stroke="#000" /><path d="M38.500 1v10M37 .500h3M37 11.500h3M41 14.500h10M41.500 13v3M51.500 13v3" stroke="#000" fill="none" /><text x="25" y="10" font-size="10">r1</text><text x="40" y="25" font-size="10">r2</text><text x="22" y="53" font-size="9">L</text></svg>
                  </div>
                  <fieldset class="orient">
                    <legend>Orientation:</legend>
                    <label v-for="o in ['Longitudinal', 'Transverse', 'Vertical', 'Vector']" :key="o" class="opt"><input v-model="orientation" type="radio" name="orientation" :value="o" />{{ o }}</label>
                  </fieldset>
                </div>
                <fieldset class="fields vec">
                  <legend>Orientation Vector:</legend>
                  <label v-for="f in vector" :key="f[0]"><span>{{ f[0] }}</span><input v-model="f[1]" type="text" /></label>
                </fieldset>
                <fieldset class="fields sizes">
                  <legend>Size:</legend>
                  <label v-for="f in size" :key="f[0]"><span>{{ f[0] }}</span><input v-model="f[1]" type="text" /></label>
                </fieldset>
                <fieldset class="fields">
                  <legend>Center:</legend>
                  <label v-for="f in center" :key="f[0]"><span>{{ f[0] }}</span><input v-model="f[1]" type="text" /></label>
                </fieldset>
                <fieldset class="options">
                  <legend>Options:</legend>
                  <label class="opt tall"><input v-model="closeEnds" type="checkbox" />Close Ends</label>
                  <label class="opt tall"><input v-model="symmetrical" type="checkbox" />Symmetrical</label>
                  <label v-for="o in ['Half Model on Centreline', 'Full Model']" :key="o" class="opt inner"><input v-model="model" type="radio" name="model" :value="o" disabled />{{ o }}</label>
                </fieldset>
                <fieldset class="arcs">
                  <legend>Surfaces:</legend>
                  <label v-for="o in ['90deg arcs', '180deg arcs']" :key="o" class="opt"><input v-model="arcs" type="radio" name="arcs" :value="o" /><span :class="{ indent: o === '90deg arcs' }">{{ o }}</span></label>
                </fieldset>
              </div>
              <footer class="dfoot"><button type="submit">OK</button><button type="button">Cancel</button></footer>
            </form>
          </div>
          <div class="vruler right">
            <div v-for="t in ticks" :key="t.v" class="tick" :class="{ major: t.major }"><i v-if="!t.bare"></i><span>{{ t.label }}</span></div>
            <b class="axis">Roll</b><em class="thumb"></em>
          </div>
        </div>
        <div class="hrow">
          <div class="hruler">
            <div v-for="t in ticks" :key="t.v" class="tick" :class="{ major: t.major, zero: t.v === 0 }"><i></i><span>{{ t.v === 0 ? '0 Yaw' : t.label }}</span></div>
            <em class="thumb"></em>
          </div>
          <div class="corner"></div>
        </div>
      </section>
    </main>

    <div class="dock">
      <div class="bar">
        <span class="grip"></span><button class="dots">...</button><span class="tsep"></span>
        <button class="tool" aria-label="User"><svg viewBox="0 0 24 24"><path d="M7 7q0-6 5-6t5 6q0 4-2 6v2q8 1 9 8H0q1-7 9-8v-2q-2-2-2-6z" fill="#0b84d8" /></svg></button>
        <button class="more" aria-label="More"></button>
      </div>
    </div>
    <footer class="status"><span>Ready</span><span class="path">C:\Users\Ncs\Documents\Untitled.msd</span><span class="cell">NUM</span><span class="cell">Object Snap: OFF</span></footer>
  </div>
</template>

<style>
body { margin: 0; background: #f0f0f0; }
</style>

<style scoped>
* { box-sizing: border-box; }
.app { min-height: 100vh; display: flex; flex-direction: column; font: 20px/26px "Open Sans", "Noto Sans", sans-serif; color: #000; background: #f0f0f0; overflow: hidden; }
.defs { position: absolute; }
button { font: inherit; color: inherit; background: none; border: 0; padding: 0; margin: 0; }
svg { display: block; flex: none; overflow: visible; }
h2, h3 { font: inherit; margin: 0; }

.titlebar { position: relative; height: 40px; display: flex; align-items: center; padding-right: 2px; background: #f3f3f3; color: #8c8c8c; }
.logo { width: 28px; height: 28px; margin: 0 6px 0 2px; }
.title { flex: 1; line-height: 40px; padding-top: 2px; }
.win { width: 81px; height: 40px; display: grid; place-items: center; }
.win svg { width: 16px; height: 16px; fill: none; stroke: #8c8c8c; stroke-width: 1.2; }
.snapbar { position: absolute; top: -8px; right: 367px; width: 530px; height: 8px; box-shadow: 0 0 5px #888; }
.strip { height: 33px; background: linear-gradient(#bfcddc, #ccdae8); border-bottom: 2px solid #b8cadb; }

.tabs { position: relative; display: flex; align-items: flex-end; height: 50px; padding: 0 6px 0 95px; background: #f0f0f0; }
.orb { position: absolute; left: 13px; top: -21px; width: 66px; height: 66px; display: grid; place-items: center; border: 3px solid #999; border-radius: 50%; background: linear-gradient(#fafafa 10%, #cfcfcf 48%, #a8a8a8 52%, #dcdcdc); box-shadow: 1px 2px 3px #aaa, inset 0 0 0 2px #e8ecf4; z-index: 2; }
.orb svg { width: 29px; height: 25px; margin-bottom: 4px; }
.tab { height: 47px; padding: 0 24px; border: 1px solid transparent; border-bottom: 0; line-height: 47px; white-space: nowrap; }
.tab.active { background: linear-gradient(#fff, #fafafa); border-color: #999; border-radius: 6px 6px 0 0; z-index: 1; }
.mdi { margin-left: auto; display: flex; gap: 13px; padding-bottom: 18px; }
.mdi svg { width: 16px; height: 16px; fill: none; stroke: #1b2a3c; stroke-width: 2; }

.ribbonwrap { margin-top: -2px; padding: 0 2px 5px 3px; background: #b9bbb9; }
.ribbon { display: flex; gap: 6px; padding: 3px 2px; border: 2px solid #999; border-radius: 6px; background: linear-gradient(#fff, #f0f0f0 85%, #fff); height: 170px; }
.group { flex: none; display: flex; flex-direction: column; border: 2px solid #9c9c9c; border-radius: 6px; overflow: hidden; background: linear-gradient(#fdfdfd, #efefef 60%); box-shadow: 0 0 0 2px #fff; }
.cols { flex: 1; display: flex; padding: 3px 0 0 6px; }
.group h2 { height: 32px; line-height: 38px; text-align: center; background: linear-gradient(#dcdcdc, #a4a4a4); }
.col { display: flex; flex-direction: column; align-items: flex-start; color: #1e2b3c; flex: none; }
.col.sep { border-left: 1px solid #8d99a8; margin-bottom: 3px; }
.col.gap { margin-left: 9px; }
.item { display: flex; align-items: center; height: 41px; padding: 0 4px; gap: 2px; border: 1px solid transparent; white-space: nowrap; }
.item svg { width: 24px; height: 24px; }
.item svg.wide { width: 31px; height: 31px; }
.item.noicon { padding-left: 10px; }
.shapes .item { width: 41px; justify-content: center; padding: 0; }
.on { background: linear-gradient(#fff8e2, #ffedc0); border: 1px solid #e8bf5c; color: #000; }
.shapes .on { background: #fde6a4; }
.off { color: #868686; }
.off svg { filter: grayscale(1) opacity(.6); }
.arrow { display: inline-block; border: 5px solid transparent; border-top: 6px solid #1e2b3c; border-bottom: 0; margin-left: 3px; }
.big { width: 100%; display: flex; flex-direction: column; align-items: center; padding-top: 3px; }
.big svg { width: 48px; height: 48px; margin-bottom: 18px; }
.bl { display: flex; align-items: center; justify-content: center; min-height: 26px; white-space: nowrap; }
.lone { align-items: flex-end; padding-bottom: 2px; }

.toolbars { display: flex; gap: 6px; height: 49px; padding: 1px 0 2px 5px; background: #9aaac4; }
.bar { display: flex; align-items: center; background: #bbc7d9; border: 2px solid #c8d4e5; border-radius: 2px; padding-left: 4px; }
.grip { width: 5px; height: 28px; background: repeating-linear-gradient(#66748f 0 4px, transparent 4px 8px); margin-right: 1px; }
.tool { width: 39px; height: 38px; display: grid; place-items: center; border: 1px solid transparent; }
.tool.on { border-color: #e8bf5c; }
.tool svg { width: 24px; height: 24px; }
.tsep { width: 1px; height: 33px; margin: 0 5px; background: #8391a8; }
.more { align-self: stretch; width: 18px; margin: -2px; margin-left: 5px; background: #d5dbe8; display: flex; flex-direction: column; align-items: center; justify-content: flex-end; padding-bottom: 6px; }
.more::before { content: ""; width: 10px; height: 2px; background: #1b2a3c; margin-bottom: 2px; }
.more::after { content: ""; border: 5px solid transparent; border-top: 5px solid #1b2a3c; border-bottom: 0; }
.combo { position: relative; width: 150px; height: 39px; background: #fff; border: 1px solid #8391a8; }
.combo select { width: 124px; height: 37px; appearance: none; border: 0; padding: 0 0 0 5px; background: #fff; font: 21px/36px "Open Sans", sans-serif; color: #000; border-radius: 0; text-overflow: clip; overflow: hidden; }
.combo .arrow { position: absolute; right: 0; top: 0; width: 25px; height: 37px; margin: 0; border: 0; border-left: 1px solid #8391a8; background: #bbc7d9; display: grid; place-items: center; }
.combo .arrow::after { content: ""; border: 6px solid transparent; border-top: 8px solid #1b2a3c; border-bottom: 0; }

.work { flex: 1; display: flex; min-height: 0; }
.side { width: 196px; flex: none; display: flex; flex-direction: column; margin-right: 8px; }
.phead { display: flex; align-items: center; height: 37px; flex: none; padding: 3px 8px 0 7px; background: linear-gradient(90deg, #bccbdb, #d6e4f2); font-size: 22px; }
.phead h3 { flex: 1; }
.phead button { margin-left: 14px; }
.phead svg { width: 16px; height: 18px; fill: none; stroke: #000; stroke-width: 2; }
.tree { flex: 1; list-style: none; margin: 0 0 7px; padding: 1px 0 0 5px; background: #fff; font: 18px/24px "Liberation Mono", monospace; color: #222; }
.tree li { display: flex; align-items: center; gap: 4px; }
.tree .sub { padding-left: 19px; }
.tree svg { width: 34px; height: 16px; }
.pcombo { display: flex; align-items: center; height: 49px; padding: 4px 0 4px 5px; background: #bbc7d9; border-left: 4px solid #9aaac4; position: relative; }
.pcombo select { flex: 1; height: 41px; appearance: none; border: 1px solid #838383; border-right: 0; border-radius: 0; background: #f0f0f0; opacity: 1; }
.pcombo .arrow { position: absolute; right: 3px; border-width: 6px 7px 0; border-top-color: #808080; }
.psort { display: flex; height: 46px; }
.psort button { width: 31px; height: 30px; display: grid; place-items: center; border: 1px solid transparent; border-radius: 3px; }
.psort .sel { background: #cce8ff; border-color: #99d1ff; }
.psort svg { width: 20px; height: 20px; }
.pbox { height: 413px; background: #fff; border: 2px solid #9c9c9c; }

.view { flex: 1; min-width: 0; display: flex; flex-direction: column; border-top: 2px solid #777; border-left: 2px solid #777; border-right: 2px solid #e8e8e8; border-bottom: 2px solid #fff; font: 7px/10px "Liberation Sans", sans-serif; color: #333; }
.vrow { flex: 1; display: flex; min-height: 0; }
.vruler { position: relative; width: 14px; flex: none; display: flex; flex-direction: column; justify-content: space-between; padding: 14px 0 13px; background: #f0f0f0; }
.vruler.right { width: 15px; border-left: 1px solid #777; }
.tick { display: flex; }
.tick span { white-space: nowrap; }
.tick i { background: #000; flex: none; }
.vruler .tick { height: 1px; align-items: center; justify-content: flex-end; }
.right .tick { justify-content: flex-start; }
.vruler i { width: 4px; height: 1px; margin-left: 1px; }
.right i { margin-left: 0; margin-right: 1px; }
.vruler .major i { width: 8px; }
.axis { position: absolute; top: 510px; left: 1px; font-size: 9px; font-weight: 400; writing-mode: vertical-rl; transform: rotate(180deg); }
.thumb { position: absolute; background: #fff; border: 1px solid #bbb; border-radius: 5px; }
.vruler .thumb { left: 1px; top: 565px; width: 13px; height: 10px; border-right: 2px solid #0b84d8; }
.right .thumb { top: 584px; border-right: 1px solid #bbb; border-left: 2px solid #0b84d8; }
.hrow { display: flex; height: 15px; border-top: 1px solid #777; }
.hruler { position: relative; flex: 1; display: flex; justify-content: space-between; padding: 0 14px 0 12px; background: #f0f0f0; font-size: 8px; }
.hruler .tick { width: 1px; flex-direction: column; align-items: center; }
.hruler .zero { align-items: flex-start; }
.hruler i { width: 1px; height: 4px; }
.hruler .major i { height: 8px; }
.hruler .thumb { left: 1034px; top: 3px; width: 11px; height: 11px; border-radius: 3px; }
.corner { width: 15px; background: #000; border-left: 1px solid #777; }
.canvas { position: relative; flex: 1; min-width: 0; background: #000; }
.model { position: absolute; left: 940px; top: 293px; width: 480px; height: 440px; }
.triad { position: absolute; right: 50px; bottom: 70px; width: 110px; height: 90px; }

.dialog { position: absolute; left: 170px; top: 96px; width: 630px; background: #f0f0f0; border: 2px solid #3a3a3a; border-radius: 12px; overflow: hidden; font: 18px/22px "DejaVu Sans Condensed", "DejaVu Sans", sans-serif; color: #000; padding-bottom: 21px; }
.dhead { display: flex; justify-content: space-between; align-items: center; height: 49px; padding: 0 20px 1px 12px; background: #f3f3f3; color: #8c8c8c; font: 20px/26px "Open Sans", sans-serif; }
.dhead svg { width: 16px; height: 16px; fill: none; stroke: #8c8c8c; stroke-width: 1.3; }
.dbody { display: grid; grid-template-columns: 318px 250px; gap: 12px 24px; padding: 20px 17px 0; grid-template-rows: 179px 172px 200px; }
.pair { display: flex; gap: 18px; height: 173px; }
.preview { width: 150px; border: 1px solid #000; background: #fff; display: grid; place-items: center; }
.preview svg { width: 56px; height: 56px; font-family: "Liberation Sans", sans-serif; }
fieldset { min-width: 0; margin: 0; padding: 0 0 0 14px; border: 1px solid #dcdcdc; }
legend { padding: 0 5px 0 2px; margin-left: -8px; height: 22px; white-space: nowrap; }
.orient { flex: 1; margin-top: 2px; padding: 6px 0 0 13px; }
.opt { display: flex; align-items: center; height: 34px; gap: 5px; white-space: nowrap; }
.opt.tall { height: 40px; }
.opt.inner { padding-left: 15px; color: #6d6d6d; }
.indent { padding-left: 5px; }
.opt input { appearance: none; flex: none; width: 20px; height: 20px; margin: 0; border: 1px solid #666; background: #f6f6f6; border-radius: 50%; }
.opt input:checked { border: 6px solid #005fb8; background: #fff; }
.opt input:disabled { border-color: #c4c4c4; }
.opt input[type="checkbox"] { border-radius: 4px; display: grid; place-items: center; }
.opt input[type="checkbox"]:checked { border: 0; background: #005fb8; }
.opt input[type="checkbox"]:checked::after { content: ""; width: 5px; height: 9px; border: solid #fff; border-width: 0 1px 1px 0; transform: rotate(45deg); margin-bottom: 3px; }
.fields label { display: flex; align-items: flex-start; height: 34px; margin-bottom: 15px; line-height: 42px; }
.fields span { width: 98px; margin-right: 11px; white-space: nowrap; }
.fields input { width: 108px; height: 34px; border: 1px solid #e8e8e8; border-bottom-color: #868686; background: #fff; padding: 0 3px 4px; font: inherit; line-height: 28px; color: #000; border-radius: 2px; }
.fields.sizes span { width: 105px; }
.vec { height: 171px; margin-top: 2px; padding-top: 2px; }
.vec label { line-height: 38px; }
.options { padding: 4px 0 0 19px; }
.options legend { margin-left: -13px; }
.arcs { height: 94px; padding: 1px 0 0 17px; }
.arcs legend { margin-left: -11px; }
.dfoot { display: flex; justify-content: flex-end; gap: 34px; padding: 31px 18px 0; }
.dfoot button { width: 123px; height: 38px; background: #fdfdfd; border: 1px solid #d0d0d0; border-bottom-color: #bbb; border-radius: 5px; }

.dock { display: flex; height: 49px; padding: 2px 0 1px 5px; background: #9aaac4; }
.dock .bar { padding-left: 5px; }
.dots { width: 31px; color: #1b2a3c; }
.dock .tool { width: 39px; }
.dock .more { margin-left: 4px; }
.dock .tsep { margin: 0 4px 0 3px; }
.status { display: flex; align-items: center; height: 30px; padding: 0 12px 2px 2px; border-bottom: 2px solid #3c4850; border-top: 1px solid #d8d8d8; font-size: 22px; line-height: 26px; white-space: nowrap; }
.path { margin-left: auto; padding-right: 15px; }
.cell { padding: 0 4px; border-left: 1px solid #d0d0d0; }
.cell:last-child { padding-right: 0; }
</style>
